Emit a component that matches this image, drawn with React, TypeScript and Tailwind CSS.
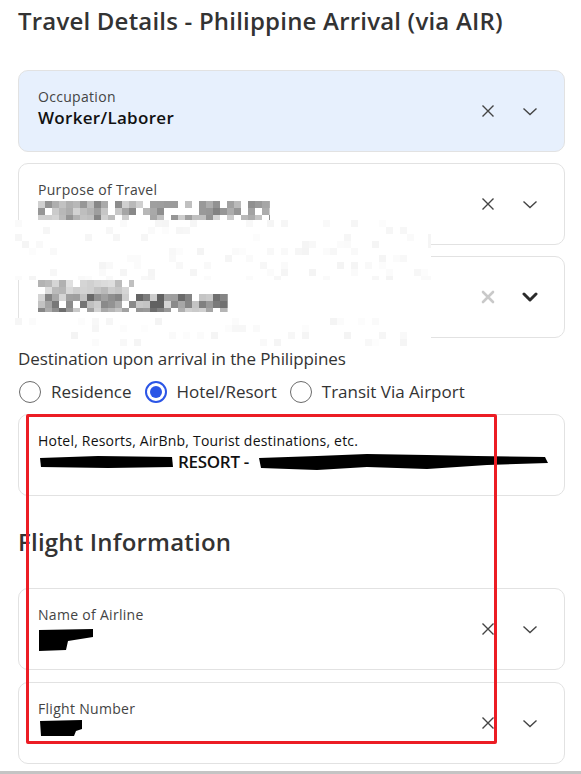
import React from "react";

// deterministic noise for the pixelated redactions
function seeded(seed: number) {
  let s = seed;
  return () => {
    s = (s * 16807) % 2147483647;
    return s / 2147483647;
  };
}

type PixelsProps = {
  w: number;
  h: number;
  cell?: number;
  seed: number;
  min: number;
  max: number;
  density: number;
};

const Pixels = ({ w, h, cell = 7, seed, min, max, density }: PixelsProps) => {
  const rnd = seeded(seed);
  const rects: React.ReactNode[] = [];
  for (let y = 0; y < h; y += cell) {
    for (let x = 0; x < w; x += cell) {
      if (rnd() < density) {
        const g = Math.round(min + rnd() * (max - min));
        rects.push(
          <rect key={`${x}-${y}`} x={x} y={y} width={cell} height={cell} fill={`rgb(${g},${g},${g})`} />
        );
      }
    }
  }
  return (
    <svg width={w} height={h} className="block">
      {rects}
    </svg>
  );
};

const ClearIcon = ({ light }: { light?: boolean }) =>
  light ? (
    <svg width="14" height="14" viewBox="0 0 14 14">
      <path d="M2 2 L12 12 M12 2 L2 12" stroke="#c9c9c9" strokeWidth="2.6" strokeLinecap="round" />
    </svg>
  ) : (
    <svg width="14" height="14" viewBox="0 0 14 14">
      <path d="M1.5 1.5 L12.5 12.5 M12.5 1.5 L1.5 12.5" stroke="#444" strokeWidth="1.4" />
    </svg>
  );

const ChevronIcon = ({ bold }: { bold?: boolean }) =>
  bold ? (
    <svg width="16" height="10" viewBox="0 0 16 10">
      <path d="M2 2 L8 8 L14 2" fill="none" stroke="#2b2b2b" strokeWidth="3" strokeLinecap="round" strokeLinejoin="round" />
    </svg>
  ) : (
    <svg width="16" height="9" viewBox="0 0 16 9">
      <path d="M1.5 1.5 L8 7.5 L14.5 1.5" fill="none" stroke="#444" strokeWidth="1.4" />
    </svg>
  );

type FieldCardProps = {
  label?: React.ReactNode;
  value?: React.ReactNode;
  highlighted?: boolean;
  icons?: "normal" | "alt" | "none";
};

const FieldCard = ({ label, value, highlighted, icons = "normal" }: FieldCardProps) => (
  <div
    className={`flex h-[82px] rounded-[10px] border border-[#e2e2e2] pl-[19px] pr-[26px] ${
      highlighted ? "bg-[#e7f0fd]" : "bg-white"
    }`}
  >
    <div className="min-w-0 flex-1 pt-[16px]">
      {label && <div className="text-[14px] leading-[20px] tracking-[0.3px] text-[#444]">{label}</div>}
      {value}
    </div>
    {icons !== "none" && (
      <div className="flex items-center gap-[27px] self-center">
        <ClearIcon light={icons === "alt"} />
        <ChevronIcon bold={icons === "alt"} />
      </div>
    )}
  </div>
);

const Radio = ({ checked, label }: { checked?: boolean; label: string }) => (
  <label className="flex items-center gap-[10px]">
    {checked ? (
      <span className="flex h-[22px] w-[22px] items-center justify-center rounded-full border-2 border-[#2b55e6]">
        <span className="h-[12px] w-[12px] rounded-full bg-[#2b55e6]" />
      </span>
    ) : (
      <span className="h-[22px] w-[22px] rounded-full border-[1.5px] border-[#6b6b6b]" />
    )}
    <span>{label}</span>
  </label>
);

const Scribble = ({ w, h, d }: { w: number; h: number; d: string }) => (
  <svg width={w} height={h} viewBox={`0 0 ${w} ${h}`} className="block shrink-0">
    <path d={d} fill="#000" />
  </svg>
);

export default function App() {
  return (
    <div className="relative h-[774px] overflow-hidden bg-white font-['Open_Sans',sans-serif] text-[#333]">
      <div className="pl-[18px] pr-[16px] pt-[5px]">
        <h1 className="text-[24px] font-semibold leading-[32px] tracking-[0.2px] text-[#333]">
          Travel Details - Philippine Arrival (via AIR)
        </h1>

        <div className="mt-[33px] flex flex-col gap-[11px]">
          <FieldCard
            highlighted
            label="Occupation"
            value={
              <div className="text-[17px] font-semibold leading-[22px] tracking-[0.3px] text-[#111]">
                Worker/Laborer
              </div>
            }
          />
          <FieldCard
            label="Purpose of Travel"
            value={
              <div className="pt-[1px]">
                <Pixels w={232} h={19} seed={7} min={130} max={215} density={0.85} />
              </div>
            }
          />
          <FieldCard
            icons="alt"
            label={<div className="h-[8px]" />}
            value={
              <div className="-mt-[1px]">
                <Pixels w={96} h={14} seed={31} min={175} max={225} density={0.8} />
                <Pixels w={190} h={18} seed={53} min={95} max={215} density={0.85} />
              </div>
            }
          />
        </div>

        <div className="mt-[10px] text-[17px] leading-[22px] tracking-[-0.1px] text-[#333]">
          Destination upon arrival in the Philippines
        </div>
        <div className="mt-[10px] flex h-[24px] items-center gap-[13px] pl-px text-[17px] text-[#333]">
          <Radio label="Residence" />
          <Radio checked label="Hotel/Resort" />
          <Radio label="Transit Via Airport" />
        </div>

        <div className="mt-[10px]">
          <FieldCard
            icons="none"
            label={
              <span className="whitespace-nowrap tracking-[0.2px] text-[#111]">
                Hotel, Resorts, AirBnb, Tourist destinations, etc.
              </span>
            }
            value={
              <div className="flex h-[22px] items-center whitespace-nowrap">
                <Scribble w={136} h={14} d="M2 3 L60 1 L134 2 L135 12 L70 13 L3 12 Z" />
                <span className="ml-[4px] text-[17px] font-semibold tracking-[-0.3px] text-[#111]">RESORT -</span>
                <div className="ml-[8px] shrink-0">
                  <Scribble
                    w={292}
                    h={20}
                    d="M2 6 L60 4 L110 2 L170 3 L220 4 L288 5 L291 11 L230 13 L170 17 L110 15 L60 18 L4 16 Z"
                  />
                </div>
              </div>
            }
          />
        </div>

        <h2 className="mt-[30px] text-[24px] font-semibold leading-[32px] tracking-[0.2px] text-[#333]">
          Flight Information
        </h2>

        <div className="mt-[30px] flex flex-col gap-[12px]">
          <FieldCard
            label="Name of Airline"
            value={
              <div className="pt-[3px]">
                <Scribble w={56} h={24} d="M1 2 L55 1 L55 9 L30 13 L28 22 L1 23 Z" />
              </div>
            }
          />
          <FieldCard
            label="Flight Number"
            value={
              <div>
                <Scribble w={46} h={18} d="M2 2 L44 1 L44 10 L38 12 L36 17 L3 17 Z" />
              </div>
            }
          />
        </div>
      </div>

      {/* white pixelated redaction spilling over the card borders */}
      <div className="absolute left-[15px] top-[220px] bg-white">
        <Pixels w={416} h={60} seed={97} min={244} max={252} density={0.15} />
      </div>
      <div className="absolute left-[15px] top-[318px] bg-white">
        <Pixels w={416} h={28} seed={131} min={244} max={253} density={0.15} />
      </div>

      {/* red annotation box */}
      <div className="pointer-events-none absolute left-[26px] top-[414px] h-[330px] w-[471px] rounded-[2px] border-[3px] border-[#ec1c24]" />

      <div className="absolute bottom-0 left-0 right-0 h-[3px] bg-[#c4c4c4]" />
    </div>
  );
}
